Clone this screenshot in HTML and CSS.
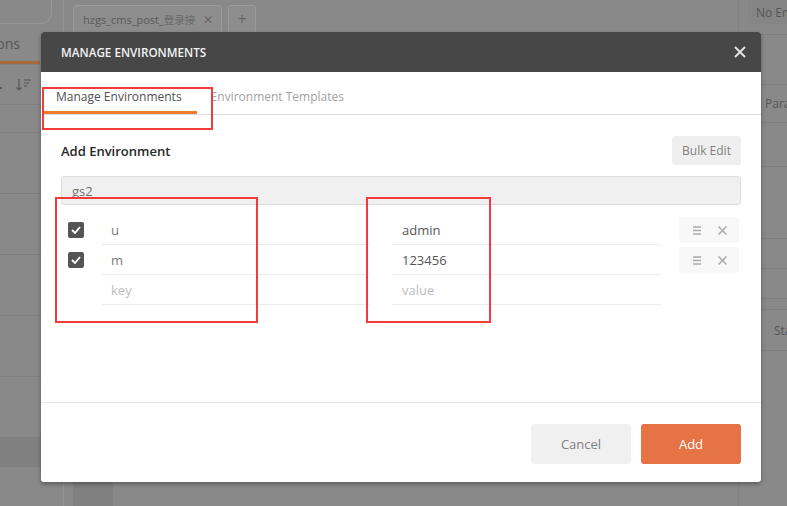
FILE: index.html
```html
<!DOCTYPE html>
<html lang="en">
<head>
  <meta charset="UTF-8">
  <title>Manage Environments</title>
  <link rel="stylesheet" href="styles.css">
</head>
<body>
  <div class="app">
    <div class="sidebar">
      <div class="search"></div>
      <div class="side-tabs"><span class="side-tab">Collections</span></div>
      <div class="sort-row">
        <span class="dot"></span>
        <svg class="sort-icon" width="16" height="14" viewBox="0 0 16 14"><path d="M3 1v11M0.5 9.5L3 12l2.5-2.5M8 2h7M8 5h5M8 8h3" stroke="#555" stroke-width="1.2" fill="none"/></svg>
      </div>
      <div class="side-item short"></div>
      <div class="side-item"></div>
      <div class="side-item"></div>
      <div class="side-item"></div>
      <div class="side-item"></div>
      <div class="side-item"></div>
      <div class="side-item band"></div>
    </div>

    <div class="main">
      <div class="tabbar">
        <div class="tab"><span class="tab-name">hzgs_cms_post_<span class="fade">登录接</span></span><span class="tab-x">✕</span></div>
        <div class="tab plus">+</div>
      </div>
      <div class="main-fill"></div>
      <div class="main-foot"><span class="strip"></span></div>
    </div>

    <div class="right">
      <div class="right-top"><div class="env-select">No Environment</div></div>
      <div class="r-row h50"></div>
      <div class="r-row h38">Params</div>
      <div class="r-row h44"></div>
      <div class="r-row h72"></div>
      <div class="r-row h30"></div>
      <div class="r-row h30"></div>
      <div class="r-row h11"></div>
      <div class="r-row h41">Status</div>
    </div>
  </div>

  <div class="modal">
    <div class="modal-header">
      <span class="modal-title">Manage Environments</span>
      <svg class="close" width="12" height="12" viewBox="0 0 12 12"><path d="M1 1l10 10M11 1L1 11" stroke="#e6e6e6" stroke-width="1.8"/></svg>
    </div>
    <div class="modal-tabs">
      <div class="mtab active">Manage Environments</div>
      <div class="mtab">Environment Templates</div>
    </div>
    <div class="modal-body">
      <div class="body-head">
        <span class="body-title">Add Environment</span>
        <button type="button" class="btn-bulk">Bulk Edit</button>
      </div>
      <div class="env-name">gs2</div>
      <div class="kv">
        <div class="kv-row">
          <span class="check"><svg width="10" height="8" viewBox="0 0 10 8"><path d="M1 4l3 3 5-6" stroke="#fff" stroke-width="1.8" fill="none"/></svg></span>
          <div class="cell key">u</div>
          <div class="cell val">admin</div>
          <div class="actions">
            <svg width="8" height="9" viewBox="0 0 8 9"><path d="M0 1h8M0 4.5h8M0 8h8" stroke="#aaa" stroke-width="1.4"/></svg>
            <svg width="9" height="9" viewBox="0 0 9 9"><path d="M0.5 0.5l8 8M8.5 0.5l-8 8" stroke="#aaa" stroke-width="1.5"/></svg>
          </div>
        </div>
        <div class="kv-row">
          <span class="check"><svg width="10" height="8" viewBox="0 0 10 8"><path d="M1 4l3 3 5-6" stroke="#fff" stroke-width="1.8" fill="none"/></svg></span>
          <div class="cell key">m</div>
          <div class="cell val">123456</div>
          <div class="actions">
            <svg width="8" height="9" viewBox="0 0 8 9"><path d="M0 1h8M0 4.5h8M0 8h8" stroke="#aaa" stroke-width="1.4"/></svg>
            <svg width="9" height="9" viewBox="0 0 9 9"><path d="M0.5 0.5l8 8M8.5 0.5l-8 8" stroke="#aaa" stroke-width="1.5"/></svg>
          </div>
        </div>
        <div class="kv-row">
          <span class="check empty"></span>
          <div class="cell key placeholder">key</div>
          <div class="cell val placeholder">value</div>
          <div class="actions empty"></div>
        </div>
      </div>
    </div>
    <div class="modal-footer">
      <button type="button" class="btn-cancel">Cancel</button>
      <button type="button" class="btn-add">Add</button>
    </div>
  </div>

  <!-- annotation boxes from the screenshot -->
  <div class="mark mark-tab"></div>
  <div class="mark mark-key"></div>
  <div class="mark mark-val"></div>
</body>
</html>
```

FILE: styles.css
```css
* {
  box-sizing: border-box;
}
body {
  margin: 0;
  font-family: 'Open Sans', 'Noto Sans CJK SC', sans-serif;
  font-size: 12px;
  background: #898989;
  overflow: hidden;
}

/* background app (dimmed) */
.app {
  display: flex;
  height: 100vh;
  background: #898989;
  color: #555;
}
.sidebar {
  width: 64px;
  border-right: 1px solid #959595;
  display: flex;
  flex-direction: column;
  overflow: hidden;
}
.search {
  width: 52px;
  height: 24px;
  border: 1px solid #979797;
  border-left: none;
  border-top: none;
  border-radius: 0 0 12px 0;
}
.side-tabs {
  height: 41px;
  display: flex;
  justify-content: flex-end;
  align-items: flex-end;
  border-bottom: 1px solid #7f7f7f;
  padding-right: 23px;
}
.side-tab {
  flex-shrink: 0;
  font-size: 14px;
  color: #555;
  padding: 0 20px 8px 0;
  border-bottom: 3px solid #a9693f;
}
.sort-row {
  height: 40px;
  display: flex;
  align-items: center;
  gap: 14px;
  border-bottom: 1px solid #7f7f7f;
}
.dot {
  width: 2px;
  height: 2px;
  background: #555;
  margin-top: 6px;
}
.side-item {
  height: 61px;
  border-bottom: 1px solid #7f7f7f;
}
.side-item.short {
  height: 28px;
}
.side-item.band {
  height: 29px;
  background: #808080;
}

.main {
  flex: 1;
  display: flex;
  flex-direction: column;
}
.tabbar {
  display: flex;
  gap: 6px;
  padding: 5px 0 0 9px;
  height: 35px;
}
.tab {
  height: 28px;
  border: 1px solid #9a9a9a;
  border-radius: 3px;
  background: #8d8d8d;
  padding: 0 8px 0 9px;
  display: flex;
  align-items: center;
  justify-content: space-between;
  font-size: 11px;
  color: #5a5a5a;
  width: 149px;
}
.tab-name {
  white-space: nowrap;
}
.fade {
  font-size: 10.5px;
  color: #6a6a6a;
}
.tab-x {
  font-size: 12px;
  color: #666;
}
.tab.plus {
  width: 28px;
  padding: 0;
  justify-content: center;
  font-size: 16px;
  color: #666;
}
.main-fill {
  flex: 1;
}
.main-foot {
  height: 24px;
  padding-left: 9px;
}
.strip {
  display: block;
  width: 40px;
  height: 24px;
  background: #808080;
}

.right {
  width: 49px;
  border-left: 1px solid #808080;
}
.right-top {
  height: 35px;
  padding-left: 9px;
  border-bottom: 1px solid #7f7f7f;
}
.env-select {
  height: 24px;
  background: #858585;
  border-radius: 0 0 0 4px;
  padding: 4px 0 0 8px;
  white-space: nowrap;
  overflow: hidden;
  color: #555;
}
.r-row {
  border-bottom: 1px solid #7f7f7f;
  padding-left: 26px;
  white-space: nowrap;
  overflow: hidden;
  display: flex;
  align-items: center;
}
.h50 { height: 50px; }
.h38 { height: 38px; }
.h44 { height: 44px; }
.h72 { height: 72px; }
.h30 { height: 30px; }
.h11 { height: 11px; }
.h41 { height: 41px; padding-left: 35px; }

/* modal */
.modal {
  position: absolute;
  left: 41px;
  top: 32px;
  width: 720px;
  height: 450px;
  background: #fff;
  border-radius: 3px;
  box-shadow: 0 2px 4px rgba(0,0,0,0.35);
  display: flex;
  flex-direction: column;
  overflow: hidden;
}
.modal-header {
  height: 40px;
  background: #474747;
  display: flex;
  align-items: center;
  justify-content: space-between;
  padding: 0 15px 0 20px;
}
.modal-title {
  color: #f2f2f2;
  font-size: 11.7px;
  font-weight: 600;
  text-transform: uppercase;
}
.modal-tabs {
  height: 43px;
  border-bottom: 1px solid #dcdcdc;
  display: flex;
  align-items: stretch;
  padding-left: 1px;
}
.mtab {
  padding: 16px 15px 0 14px;
  font-size: 12px;
  color: #a3a3a3;
}
.mtab.active {
  color: #505050;
  border-bottom: 3px solid #f47a31;
}
.modal-body {
  flex: 1;
  padding: 21px 20px 0;
  border-bottom: 1px solid #e6e6e6;
}
.body-head {
  display: flex;
  justify-content: space-between;
  align-items: center;
  height: 29px;
}
.body-title {
  font-size: 13px;
  font-weight: 600;
  color: #282828;
}
button {
  font-family: inherit;
  border: none;
  border-radius: 3px;
  cursor: pointer;
}
.btn-bulk {
  height: 29px;
  width: 69px;
  background: #efefef;
  color: #808080;
  font-size: 12px;
}
.env-name {
  margin-top: 11px;
  height: 29px;
  background: #f0f0f0;
  border: 1px solid #dedede;
  border-radius: 3px;
  padding: 5px 10px;
  font-size: 13px;
  color: #707070;
}
.kv {
  margin-top: 10px;
}
.kv-row {
  display: flex;
  align-items: center;
  height: 30px;
  padding-left: 7px;
}
.check {
  width: 16px;
  height: 16px;
  background: #555;
  border-radius: 2px;
  display: flex;
  align-items: center;
  justify-content: center;
  margin-right: 17px;
  flex-shrink: 0;
}
.check.empty {
  background: none;
}
.cell {
  width: 269px;
  height: 30px;
  border-bottom: 1px solid #ececec;
  padding: 6px 10px 0;
  font-size: 13px;
}
.cell.key {
  color: #7a7a7a;
  margin-right: 22px;
}
.cell.val {
  color: #555;
  margin-right: 18px;
}
.cell.placeholder {
  color: #bdbdbd;
}
.actions {
  width: 60px;
  height: 26px;
  background: #f8f8f8;
  border-radius: 3px;
  display: flex;
  align-items: center;
  justify-content: space-around;
  padding: 0 4px 0 6px;
}
.actions.empty {
  background: none;
}
.modal-footer {
  height: 79px;
  display: flex;
  justify-content: flex-end;
  align-items: flex-start;
  gap: 10px;
  padding: 21px 20px 0;
}
.btn-cancel,
.btn-add {
  width: 100px;
  height: 40px;
  font-size: 13px;
}
.btn-cancel {
  background: #f0f0f0;
  color: #808080;
}
.btn-add {
  background: #e57345;
  color: #fff;
}

/* red annotation boxes */
.mark {
  position: absolute;
  border: 2px solid #f43a3a;
}
.mark-tab {
  left: 42px;
  top: 87px;
  width: 171px;
  height: 43px;
}
.mark-key {
  left: 55px;
  top: 197px;
  width: 203px;
  height: 126px;
}
.mark-val {
  left: 366px;
  top: 197px;
  width: 125px;
  height: 126px;
}
```
